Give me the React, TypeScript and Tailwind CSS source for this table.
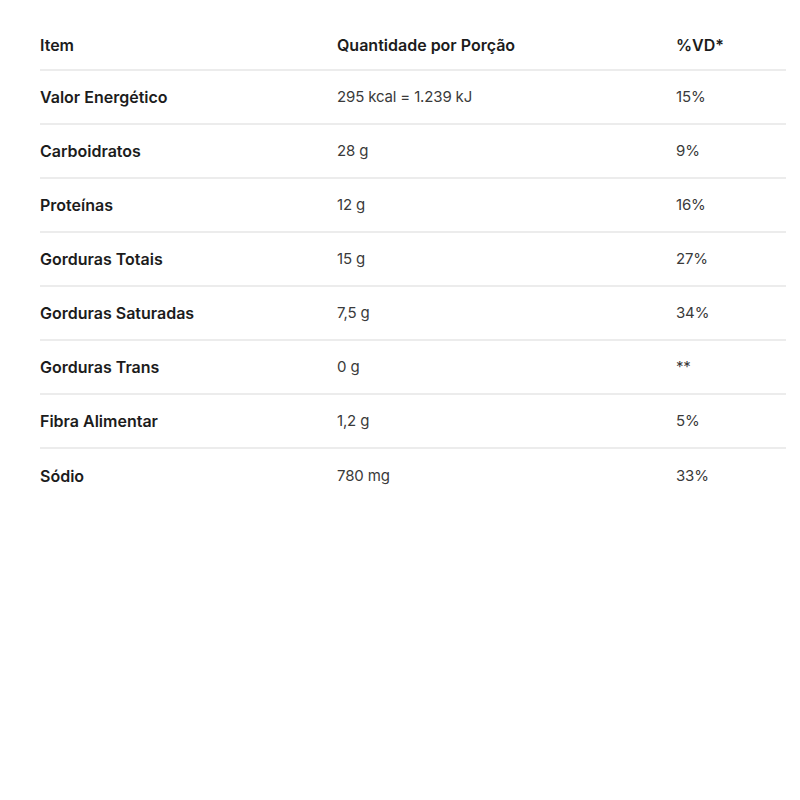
const rows = [
  { item: "Valor Energético", qty: "295 kcal = 1.239 kJ", vd: "15%" },
  { item: "Carboidratos", qty: "28 g", vd: "9%" },
  { item: "Proteínas", qty: "12 g", vd: "16%" },
  { item: "Gorduras Totais", qty: "15 g", vd: "27%" },
  { item: "Gorduras Saturadas", qty: "7,5 g", vd: "34%" },
  { item: "Gorduras Trans", qty: "0 g", vd: "**" },
  { item: "Fibra Alimentar", qty: "1,2 g", vd: "5%" },
  { item: "Sódio", qty: "780 mg", vd: "33%" },
];

export default function App() {
  return (
    <div className="min-h-[800px] bg-white pl-[40px] pr-[14px] pt-[21px] font-['Inter',sans-serif] text-[15px]">
      {/* Header */}
      <div className="grid h-[50px] grid-cols-[297px_339px_1fr] items-center border-b-2 border-[#ececec] text-[16px] font-semibold text-[#1c1c1c]">
        <div>Item</div>
        <div>Quantidade por Porção</div>
        <div>%VD*</div>
      </div>

      {rows.map((row, index) => (
        <div
          key={index}
          className={
            "grid h-[54px] grid-cols-[297px_339px_1fr] items-center " +
            (index < rows.length - 1 ? "border-b-2 border-[#ececec]" : "")
          }
        >
          <div className="text-[16px] font-semibold text-[#1c1c1c]">{row.item}</div>
          <div className="tracking-[-0.01em] text-[#3a3a3a]">{row.qty}</div>
          <div className="tracking-[-0.01em] text-[#3a3a3a]">{row.vd}</div>
        </div>
      ))}
    </div>
  );
}
